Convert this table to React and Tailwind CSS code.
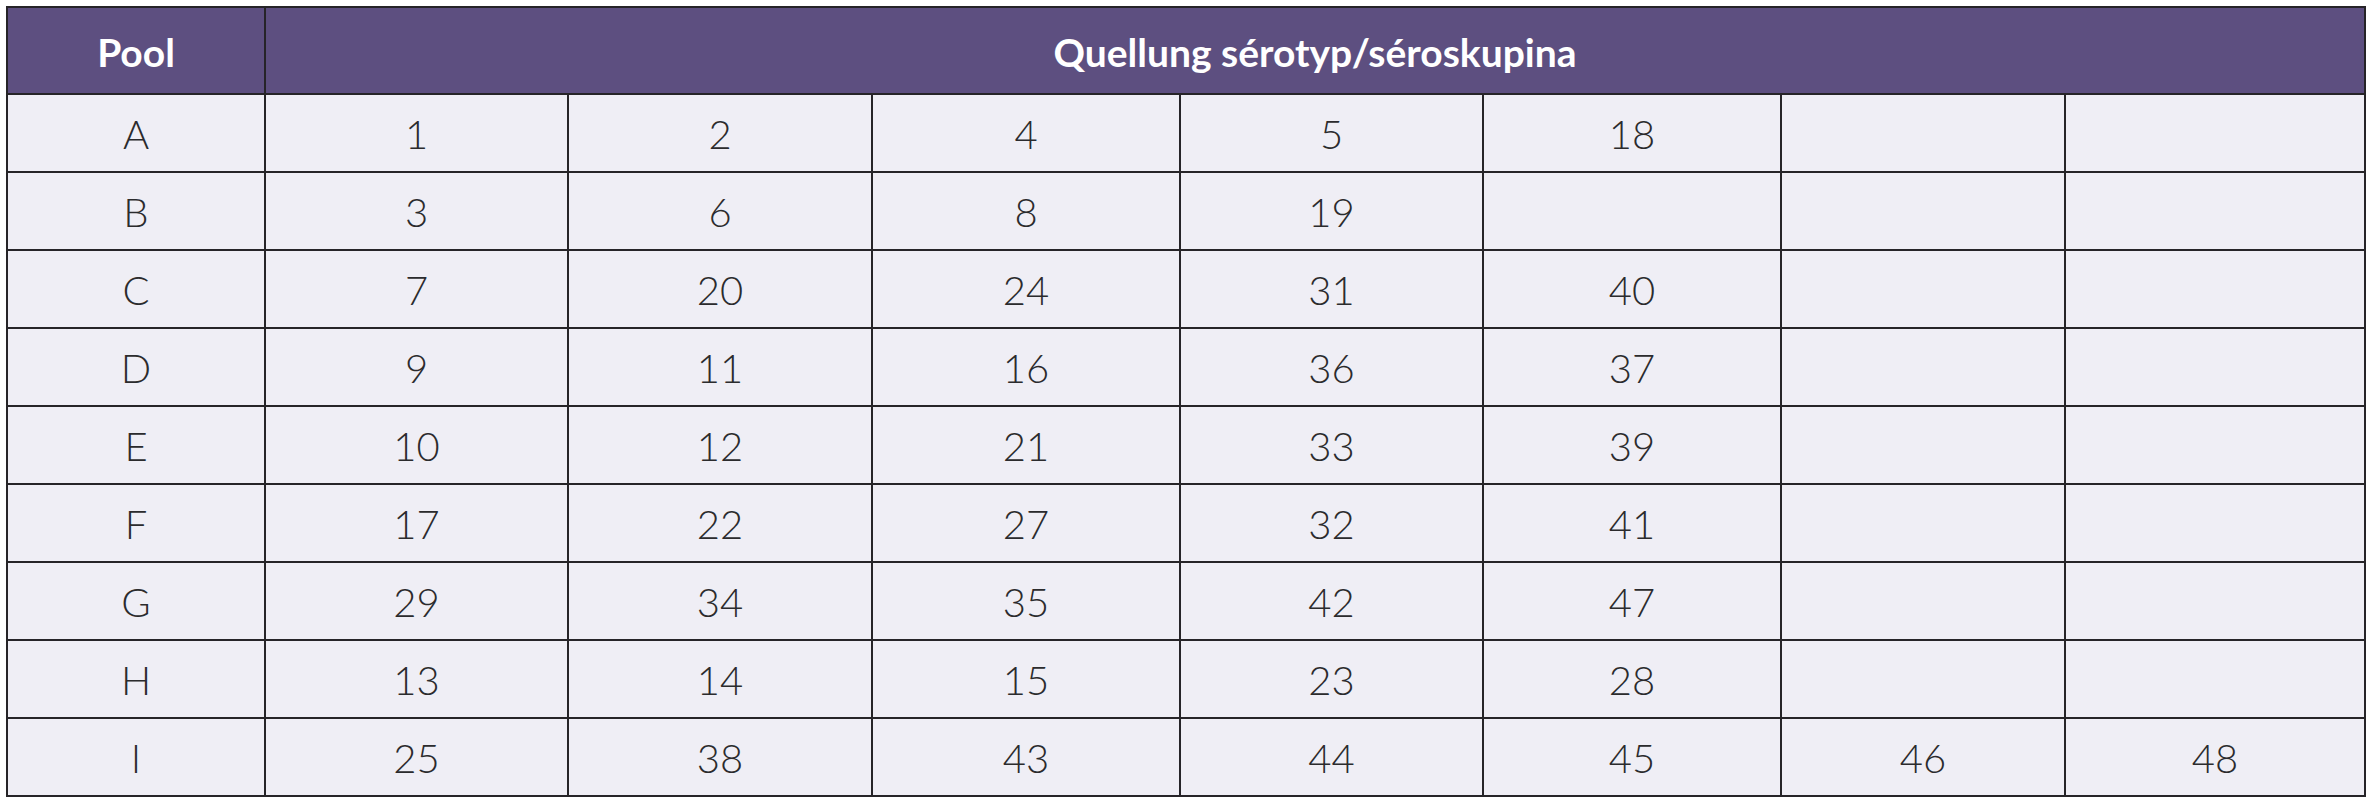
import React from "react";

const rows = [
  ["A", "1", "2", "4", "5", "18", "", ""],
  ["B", "3", "6", "8", "19", "", "", ""],
  ["C", "7", "20", "24", "31", "40", "", ""],
  ["D", "9", "11", "16", "36", "37", "", ""],
  ["E", "10", "12", "21", "33", "39", "", ""],
  ["F", "17", "22", "27", "32", "41", "", ""],
  ["G", "29", "34", "35", "42", "47", "", ""],
  ["H", "13", "14", "15", "23", "28", "", ""],
  ["I", "25", "38", "43", "44", "45", "46", "48"],
];

const widths = ["w-[258px]", "w-[303px]", "w-[304px]", "w-[308px]", "w-[303px]", "w-[298px]", "w-[284px]", "w-[300px]"];

function App() {
  return (
    <div className="bg-white p-[6px] font-['Lato','Liberation_Sans',sans-serif]">
      <table className="table-fixed border-collapse w-[2360px] border-2 border-[#262428]">
        <colgroup>
          {widths.map((w, i) => (
            <col key={i} className={w} />
          ))}
        </colgroup>
        <thead>
          <tr className="h-[87px] bg-[#5d4f80] text-white text-[39px] font-bold">
            <th className="border-2 border-[#262428] pt-[4px]">Pool</th>
            <th colSpan={7} className="border-2 border-[#262428] pt-[4px]">
              Quellung sérotyp/séroskupina
            </th>
          </tr>
        </thead>
        <tbody>
          {rows.map((row) => (
            <tr key={row[0]} className="h-[78px] bg-[#efeef5] text-[40px] font-light text-[#2b2b2d]">
              {row.map((cell, i) => (
                <td key={i} className="border-2 border-[#262428] text-center pt-[2px]">
                  {cell}
                </td>
              ))}
            </tr>
          ))}
        </tbody>
      </table>
    </div>
  );
}

export default App;
